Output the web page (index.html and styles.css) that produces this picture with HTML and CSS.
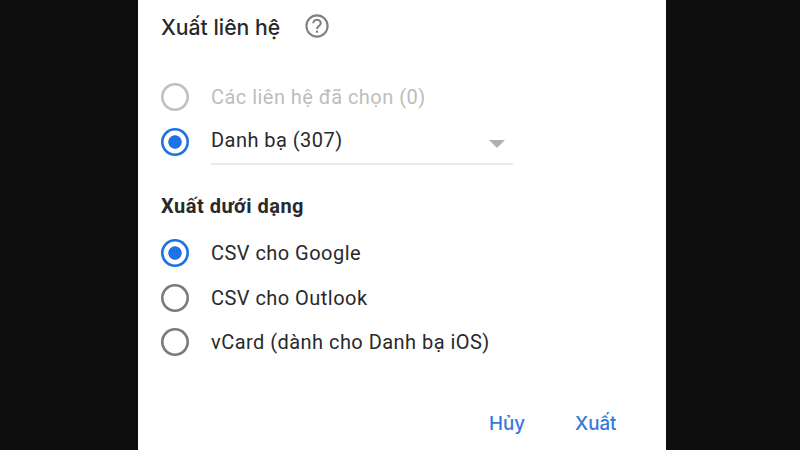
FILE: index.html
```html
<!DOCTYPE html>
<html lang="vi">
<head>
    <meta charset="UTF-8">
    <meta name="viewport" content="width=device-width, initial-scale=1.0">
    <title>Xuất liên hệ</title>
    <link rel="stylesheet" href="styles.css">
</head>
<body>
    <form class="dialog">
        <div class="header">
            <h1>Xuất liên hệ</h1>
            <svg class="help" viewBox="0 0 24 24">
                <circle cx="12" cy="12" r="10.6"/>
                <path d="M8.3 9.2c0-2 1.7-3.5 3.7-3.5s3.7 1.5 3.7 3.5c0 2.6-3.7 3-3.7 5.7M12 16.6v2.2"/>
            </svg>
        </div>

        <div class="source">
            <label class="option disabled">
                <input type="radio" name="source" disabled>
                <span>Các liên hệ đã chọn (0)</span>
            </label>
            <label class="option">
                <input type="radio" name="source" checked>
                <span class="select">
                    <span>Danh bạ (307)</span>
                    <span class="arrow"></span>
                </span>
            </label>
        </div>

        <h2>Xuất dưới dạng</h2>
        <div class="format">
            <label class="option">
                <input type="radio" name="format" checked>
                <span>CSV cho Google</span>
            </label>
            <label class="option">
                <input type="radio" name="format">
                <span>CSV cho Outlook</span>
            </label>
            <label class="option">
                <input type="radio" name="format">
                <span>vCard (dành cho Danh bạ iOS)</span>
            </label>
        </div>

        <div class="actions">
            <button type="button">Hủy</button>
            <button type="button">Xuất</button>
        </div>
    </form>
</body>
</html>
```
FILE: styles.css
```css
* {
    box-sizing: border-box;
}
body {
    margin: 0;
    height: 450px;
    overflow: hidden;
    background-color: #0e0e0e;
    font-family: Roboto, sans-serif;
    color: #28292c;
}
.dialog {
    width: 527.5px;
    height: 450px;
    margin-left: 138px;
    padding: 11px 24px 0 23px;
    background: white;
}
.header {
    display: flex;
    align-items: center;
    gap: 25px;
    height: 30px;
}
h1 {
    width: 119px;
    margin: 2px 0 0;
    font-family: Inter, Roboto, sans-serif;
    font-size: 21.2px;
    font-weight: 500;
    white-space: nowrap;
}
.help {
    width: 24px;
    height: 24px;
    fill: none;
    stroke: #808080;
    stroke-width: 2.1;
}
.source {
    margin-top: 33px;
}
.option {
    display: flex;
    align-items: center;
    gap: 22px;
    height: 45px;
    font-size: 20px;
    letter-spacing: 0.46px;
    white-space: nowrap;
}
.disabled {
    color: #bdbdbd;
}
input {
    appearance: none;
    flex: none;
    width: 28px;
    height: 28px;
    margin: 0;
    border-radius: 50%;
    box-shadow: inset 0 0 0 2.6px #7b7b7b;
}
input:checked {
    box-shadow: inset 0 0 0 2.6px #1f72e6;
    background: radial-gradient(circle, #1f72e6 6.3px, transparent 7.1px);
}
input:disabled {
    box-shadow: inset 0 0 0 2.6px #c0c0c0;
}
.select {
    display: flex;
    align-items: center;
    justify-content: space-between;
    width: 302px;
    height: 45px;
    margin-top: 1px;
    padding: 0 8px 2px 0;
    border-bottom: 2px solid #ececec;
}
.arrow {
    margin-top: 7px;
    border: 8px solid transparent;
    border-top-color: #b0b0b0;
    border-bottom: 0;
}
h2 {
    height: 24px;
    margin: 30px 0 0;
    font-size: 20px;
    font-weight: 700;
    letter-spacing: 0.5px;
    line-height: 24px;
}
.format {
    margin-top: 13px;
}
.format .option {
    height: 44.6px;
}
.actions {
    display: flex;
    justify-content: flex-end;
    gap: 50px;
    margin: 47px 25px 0 0;
}
button {
    padding: 0;
    border: none;
    background: none;
    color: #3578dc;
    font-family: Inter, Roboto, sans-serif;
    font-size: 18.8px;
    font-weight: 500;
    line-height: 24px;
}
```
